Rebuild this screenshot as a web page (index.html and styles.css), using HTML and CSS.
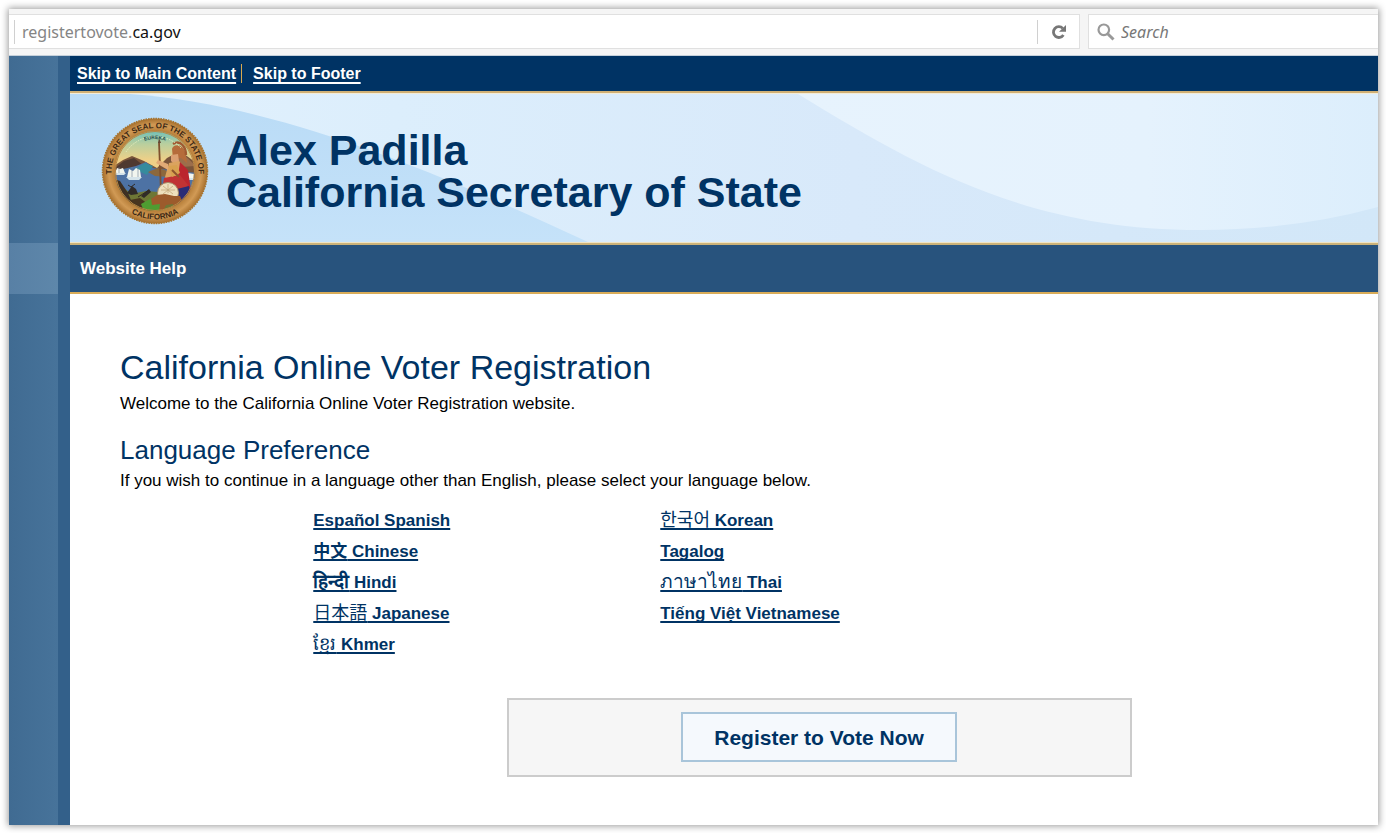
FILE: index.html
```html
<!DOCTYPE html>
<html lang="en">
<head>
    <meta charset="UTF-8">
    <meta name="viewport" content="width=device-width, initial-scale=1.0">
    <title>California Online Voter Registration</title>
    <link rel="stylesheet" href="styles.css">
</head>
<body>
    <div class="window">
        <div class="toolbar">
            <div class="url-box">
                <div class="url">registertovote.<span class="domain">ca.gov</span></div>
                <button type="button" class="reload" aria-label="Reload">
                    <svg width="16" height="16" viewBox="0 0 16 16">
                        <path d="M12.4 11A5.4 5.4 0 1 1 11.8 4.4" fill="none" stroke="#777" stroke-width="2.8"/>
                        <path d="M15 1v6.8H8z" fill="#777"/>
                    </svg>
                </button>
            </div>
            <div class="search-box">
                <svg width="18" height="18" viewBox="0 0 18 18">
                    <circle cx="6.8" cy="6.8" r="5.3" fill="none" stroke="#999" stroke-width="2.2"/>
                    <path d="M10.7 10.7l5.8 5.8" stroke="#999" stroke-width="3"/>
                </svg>
                <input type="text" class="search" placeholder="Search" aria-label="Search">
            </div>
        </div>

        <div class="site">
            <div class="side">
                <div class="side-mark"></div>
            </div>

            <div class="page">
                <div class="skip">
                    <a href="#main">Skip to Main Content</a>
                    <a href="#footer">Skip to Footer</a>
                </div>

                <header class="header">
                    <svg class="swoosh" viewBox="0 0 1308 148" preserveAspectRatio="none">
                        <defs>
                            <linearGradient id="mid" x1="0" x2="1">
                                <stop offset="0" stop-color="#e2f1fd"/>
                                <stop offset="0.25" stop-color="#dceefc"/>
                                <stop offset="0.6" stop-color="#d8e9fa"/>
                                <stop offset="1" stop-color="#d2e7f8"/>
                            </linearGradient>
                            <linearGradient id="left" x1="0" x2="0" y1="0" y2="1">
                                <stop offset="0" stop-color="#b9dbf6"/>
                                <stop offset="1" stop-color="#c5e2f9"/>
                            </linearGradient>
                            <linearGradient id="right" x1="0" x2="1">
                                <stop offset="0" stop-color="#e7f3fd"/>
                                <stop offset="0.6" stop-color="#e5f2fd"/>
                                <stop offset="1" stop-color="#dceefc"/>
                            </linearGradient>
                        </defs>
                        <rect width="1308" height="148" fill="url(#mid)"/>
                        <path d="M0 0H60C200 10 350 70 518 148H0z" fill="url(#left)"/>
                        <path d="M728 0C850 75 960 136 1130 136Q1225 136 1308 113V0z" fill="url(#right)"/>
                    </svg>
                    <svg class="seal" width="108" height="108" viewBox="0 0 108 108" role="img" aria-label="The Great Seal of the State of California">
                        <defs>
                            <radialGradient id="gold">
                                <stop offset="0.74" stop-color="#b27a35"/>
                                <stop offset="0.88" stop-color="#d19a55"/>
                                <stop offset="1" stop-color="#a66f2d"/>
                            </radialGradient>
                            <linearGradient id="sky" x1="0" x2="0" y1="0" y2="1">
                                <stop offset="0.1" stop-color="#5dbdc0"/>
                                <stop offset="0.25" stop-color="#b9cf9e"/>
                                <stop offset="0.4" stop-color="#efd087"/>
                            </linearGradient>
                            <clipPath id="scene"><circle cx="54" cy="54" r="40"/></clipPath>
                            <path id="ring-top" d="M12.6 68A43.5 43.5 0 1 1 95.4 68"/>
                            <path id="ring-bottom" d="M15 83A49 49 0 0 0 93 83"/>
                            <path id="ring-motto" d="M30 33A32 32 0 0 1 78 33"/>
                        </defs>
                        <circle cx="54" cy="54" r="52.5" fill="url(#gold)" stroke="#a7742f" stroke-width="1.5" stroke-dasharray="1.5 1"/>
                        <g clip-path="url(#scene)">
                            <rect width="108" height="108" fill="url(#sky)"/>
                            <path d="M10 51L22 43 31 39 43 44 56 51 66 41 79 34 98 48V65H10z" fill="#79543a"/>
                            <path d="M10 54L23 44 33 41 43 49 35 57H10z" fill="#4f3930"/>
                            <path d="M70 39l10-4 15 14-15 1z" fill="#9c6e4b"/>
                            <path d="M10 55l25-6 10-4 7 6 45 5v25H10z" fill="#4d72a4"/>
                            <path d="M33 52l11-6 8 3-6 9z" fill="#368b9d"/>
                            <path d="M47 55l10-4 13 4-2 5-14-1z" fill="#8c683d"/>
                            <path d="M12 64l10 6 8 7 15-3 12 1 18-4 24 2v30H12z" fill="#6e7736"/>
                            <path d="M10 61l9 3 8 12 5 12-11-2-11-15z" fill="#3e3023"/>
                            <path d="M24 84l15-3 17 13-15 4z" fill="#48351f"/>
                            <path d="M40 87l9-5 11 3 2 7-9 5-11-5z" fill="#4e9c31"/>
                            <!-- ships on the bay -->
                            <path d="M26 60l2-8 4 2 3-3 4 2 1 7zM14 56l2-5 3 1 3-1 2 5zM83 61l4-5 6 1v4z" fill="#f1f5ef"/>
                            <path d="M25 60h16l-3 3H28zM13 56h12l-2 2h-8zM82 61h12l-2 2h-8z" fill="#d4e3ea"/>
                            <path d="M31 50v10M37 50v10M18 50v6" stroke="#6b7e91" stroke-width="0.6"/>
                            <!-- miner -->
                            <path d="M26 76l5-7 4 3 2 5-7 1zM40 79l8-7 2 3-7 6z" fill="#302b28"/>
                            <path d="M27 68l3 2 4-3M37 80l11-7" stroke="#312820" fill="none"/>
                            <!-- Minerva -->
                            <path d="M58 25l2 50" stroke="#80502d" stroke-width="1.8"/>
                            <path d="M58 21l2 5h-3z" fill="#634a35"/>
                            <path d="M71 32c1-6 13-6 14 7l1 7-6-5-8 1z" fill="#b56c3b"/>
                            <path d="M72 27c8-5 13 4 13 11" fill="none" stroke="#a05a32" stroke-width="2.4"/>
                            <path d="M70 38l7-1 1 7-4 4-4-4z" fill="#dba072"/>
                            <path d="M68 46l10-2 6 7-2 13-14 2-4-6z" fill="#dba35f"/>
                            <path d="M67 47l-10-4-2 3 12 7z" fill="#e1aa76"/>
                            <path d="M79 45l8 8 3 21-9 9-8-12 4-12z" fill="#bb252e"/>
                            <path d="M63 61l16-3 8 10-9 13-14-7-4 6z" fill="#c03334"/>
                            <path d="M76 72l12-3 2 9-6 9-12 5z" fill="#292c76"/>
                            <path d="M68 49l8-1 3 8-8 4z" fill="#d8a14f"/>
                            <path d="M71 53l7 7" stroke="#8e542d" stroke-width="2"/>
                            <circle cx="67" cy="76" r="10.5" fill="#eee0bd" stroke="#a58b66"/>
                            <path d="M60 73h14M67 67v9M62 69l10 8M72 69l-10 8" stroke="#c3aa7b" stroke-width="0.8"/>
                            <!-- bear -->
                            <path d="M50 82l6-4 8-1 9 2 6 0 2 5-3 7-4 1-2-5-7 1-3 6h-4l1-7-8 1z" fill="#9c5b2c"/>
                        </g>
                        <circle cx="54" cy="54" r="39.5" fill="none" stroke="#b98642"/>
                        <path d="M25 35A35 35 0 0 1 80 31" fill="none" stroke="#e8f0c1" stroke-width="1" stroke-dasharray="1.5 1.2"/>
                        <text class="seal-text"><textPath href="#ring-top" startOffset="50%" text-anchor="middle">THE GREAT SEAL OF THE STATE OF</textPath></text>
                        <text class="seal-text"><textPath href="#ring-bottom" startOffset="50%" text-anchor="middle">CALIFORNIA</textPath></text>
                        <text class="seal-motto"><textPath href="#ring-motto" startOffset="50%" text-anchor="middle">EUREKA</textPath></text>
                    </svg>
                    <div class="title">Alex Padilla<br>California Secretary of State</div>
                </header>

                <nav class="nav">
                    <a href="#help">Website Help</a>
                </nav>

                <main class="content" id="main">
                    <h1>California Online Voter Registration</h1>
                    <p>Welcome to the California Online Voter Registration website.</p>

                    <h2>Language Preference</h2>
                    <p>If you wish to continue in a language other than English, please select your language below.</p>

                    <div class="languages">
                        <ul>
                            <li><a href="#es">Español Spanish</a></li>
                            <li><a href="#zh"><span lang="zh">中文</span> Chinese</a></li>
                            <li><a href="#hi"><span class="large" lang="hi">हिन्दी</span> Hindi</a></li>
                            <li><a href="#ja"><span class="light" lang="ja">日本語</span> Japanese</a></li>
                            <li><a href="#km"><span class="light" lang="km">ខ្មែរ</span> Khmer</a></li>
                        </ul>
                        <ul>
                            <li><a href="#ko"><span class="light" lang="ko">한국어</span> Korean</a></li>
                            <li><a href="#tl">Tagalog</a></li>
                            <li><a href="#th"><span class="light large" lang="th">ภาษาไทย</span> Thai</a></li>
                            <li><a href="#vi">Tiếng Việt Vietnamese</a></li>
                        </ul>
                    </div>

                    <div class="register">
                        <button type="button">Register to Vote Now</button>
                    </div>
                </main>
            </div>
        </div>
    </div>
</body>
</html>
```

FILE: styles.css
```css
* {
    box-sizing: border-box;
}

body {
    margin: 0;
    padding: 9px 8px 8px 9px;
    background-color: #fff;
    color: #000;
    font-family: "Liberation Sans", Arial, "Noto Sans CJK SC", sans-serif;
    font-size: 17px;
    line-height: 24px;
}

.window {
    display: flex;
    flex-direction: column;
    min-height: calc(100vh - 17px);
    background-color: #fff;
    box-shadow: 0 0 7px 1px rgba(0, 0, 0, 0.4);
}

/* browser bar */
.toolbar {
    display: flex;
    gap: 8px;
    padding: 5px 0 6px;
    background-color: #f5f5f5;
    border-bottom: 1px solid #c5d0da;
    font-family: "Noto Sans", "Open Sans", sans-serif;
    font-size: 16px;
}

.url-box,
.search-box {
    display: flex;
    align-items: center;
    height: 35px;
    background-color: #fff;
    border: 1px solid #e0e0e0;
}

.url-box {
    flex: 1;
    border-left: none;
    padding-left: 5px;
}

.url {
    flex: 1;
    border-left: 1px solid #d0d0d0;
    padding-left: 7px;
    color: #858585;
}

.domain {
    color: #111;
}

.reload {
    display: flex;
    align-items: center;
    justify-content: center;
    width: 42px;
    height: 24px;
    padding: 0;
    background: none;
    border: none;
    border-left: 1px solid #d0d0d0;
}

.search-box {
    width: 290px;
    padding-left: 8px;
    gap: 6px;
    border-right: none;
}

.search {
    flex: 1;
    min-width: 0;
    padding: 0;
    border: none;
    background: none;
    font: inherit;
    font-style: italic;
}

.search::placeholder {
    color: #777;
}

/* site */
.site {
    display: flex;
    flex: 1;
}

.side {
    width: 61px;
    padding-top: 187px;
    background: linear-gradient(to right, #406b92, #47739a);
    border-right: 12px solid #33608a;
}

.side-mark {
    height: 51px;
    background: linear-gradient(to right, #5880a5, #5e87aa);
}

.page {
    flex: 1;
    min-width: 0;
}

.skip {
    display: flex;
    align-items: center;
    height: 37px;
    padding-left: 7px;
    background-color: #003364;
    border-bottom: 2px solid #d0b075;
    font-size: 16px;
    line-height: 19px;
}

.skip a {
    color: #fff;
    font-weight: bold;
    text-decoration-thickness: 2px;
    text-underline-offset: 3px;
    text-decoration-skip-ink: none;
}

.skip a + a {
    margin-left: 5px;
    padding-left: 11px;
    border-left: 1px solid #d9a94f;
}

.header {
    position: relative;
    display: flex;
    align-items: center;
    gap: 17px;
    height: 150px;
    padding: 6px 0 0 31px;
    border-top: 1px solid #f3ecd8;
    border-bottom: 1px solid #f0e4c4;
}

.swoosh {
    position: absolute;
    top: 0;
    left: 0;
    width: 100%;
    height: 100%;
}

.seal {
    position: relative;
}

.seal-text {
    font-size: 8px;
    font-weight: bold;
    fill: #3c2815;
}

.seal-motto {
    font-size: 5px;
    font-weight: bold;
    fill: #234b4b;
}

.title {
    position: relative;
    color: #003364;
    font-size: 43px;
    font-weight: bold;
    line-height: 42px;
}

.nav {
    display: flex;
    align-items: center;
    height: 51px;
    padding-left: 10px;
    background-color: #28537d;
    border-top: 2px solid #cbb279;
    border-bottom: 2px solid #d9ac58;
}

.nav a {
    color: #fff;
    font-weight: bold;
    text-decoration: none;
}

.content {
    padding: 52px 50px 48px;
}

h1,
h2 {
    margin: 0 0 4px;
    color: #003364;
    font-weight: normal;
}

h1 {
    font-size: 34px;
    line-height: 42px;
}

h2 {
    margin-top: 19px;
    font-size: 26px;
    line-height: 30px;
}

p {
    margin: 0;
}

.languages {
    display: flex;
    margin: 12px 0 38px 16%;
}

.languages ul {
    flex: 0 0 347px;
    margin: 0;
    padding: 0;
    list-style: none;
}

.languages li {
    height: 31px;
    line-height: 31px;
}

.languages a {
    color: #003364;
    font-weight: bold;
    text-decoration-thickness: 2px;
    text-underline-offset: 2px;
    text-decoration-skip-ink: none;
}

.languages span {
    line-height: 1;
}

.light {
    font-size: 18px;
    font-weight: normal;
}

.large {
    font-size: 19px;
}

.register {
    max-width: 625px;
    margin-left: 32%;
    padding: 12px 12px 13px;
    background-color: #f6f6f6;
    border: 2px solid #ccc;
    text-align: center;
}

.register button {
    display: block;
    width: 276px;
    height: 50px;
    margin: 0 auto;
    padding: 2px 0 0;
    background-color: #f5f9fd;
    border: 2px solid #a9c5da;
    color: #003364;
    font-family: inherit;
    font-size: 21px;
    font-weight: bold;
}
```
